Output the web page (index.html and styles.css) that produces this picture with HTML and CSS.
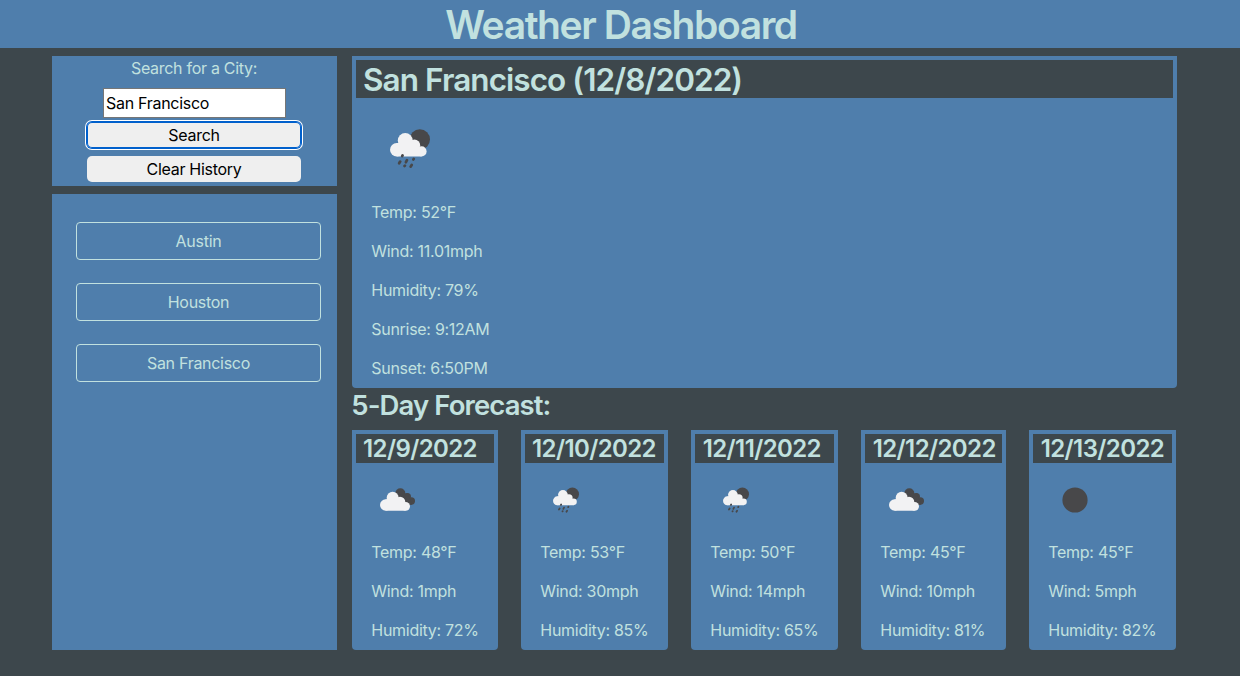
FILE: index.html
```html
<!DOCTYPE html>
<html lang="en">
<head>
<meta charset="utf-8">
<title>Weather Dashboard</title>
<link rel="stylesheet" href="styles.css">
</head>
<body>
<svg class="defs" aria-hidden="true">
  <symbol id="rain" viewBox="30 26 118 115">
    <circle cx="118" cy="57" r="30" fill="#48484a"/>
    <g fill="#f2f2f3"><circle cx="50" cy="87" r="20"/><circle cx="75" cy="60" r="22"/><circle cx="102" cy="74" r="17"/><circle cx="123" cy="92" r="15"/><path d="M50 67h50l23 20v20H50z"/></g>
    <g stroke="#48484a" stroke-width="8" stroke-linecap="round"><path d="M67 104l-1 2M60 122l-3 5M80 118l-3 6M100 114l-1 2M74 134l-1 1M94 132l-3 5"/></g>
  </symbol>
  <symbol id="clouds" viewBox="105 191 105 67">
    <g fill="#48484a"><circle cx="166" cy="206" r="15"/><circle cx="187" cy="216" r="11"/><circle cx="199" cy="229" r="11"/><path d="M155 210l34-4 12 34h-30z"/></g>
    <g fill="#f2f2f3"><circle cx="122" cy="241" r="17"/><circle cx="143" cy="219" r="18"/><circle cx="165" cy="232" r="16"/><circle cx="182" cy="245" r="13"/><path d="M122 224h43l17 12v22h-60z"/></g>
  </symbol>
  <symbol id="night" viewBox="0 0 26 26"><circle cx="13" cy="13" r="12.6" fill="#48484a"/></symbol>
</svg>
<header class="banner"><h1>Weather Dashboard</h1></header>
<main class="layout">
  <aside class="sidebar">
    <form class="search">
      <label for="city">Search for a City:</label>
      <input id="city" class="city" type="text" value="San Francisco">
      <button type="button" class="btn focused">Search</button>
      <button type="button" class="btn">Clear History</button>
    </form>
    <div class="history">
      <button type="button" class="past">Austin</button>
      <button type="button" class="past">Houston</button>
      <button type="button" class="past">San Francisco</button>
    </div>
  </aside>
  <section class="content">
    <article class="card today">
      <h2>San Francisco (12/8/2022)</h2>
      <div class="icon"><svg class="rain"><use href="#rain"/></svg></div>
      <p>Temp: 52°F</p><p>Wind: 11.01mph</p><p>Humidity: 79%</p><p>Sunrise: 9:12AM</p><p>Sunset: 6:50PM</p>
    </article>
    <h3 class="title">5-Day Forecast:</h3>
    <div class="forecast">
      <article class="card"><h4>12/9/2022</h4><div class="icon"><svg class="clouds"><use href="#clouds"/></svg></div><p>Temp: 48°F</p><p>Wind: 1mph</p><p>Humidity: 72%</p></article>
      <article class="card"><h4>12/10/2022</h4><div class="icon"><svg class="rain"><use href="#rain"/></svg></div><p>Temp: 53°F</p><p>Wind: 30mph</p><p>Humidity: 85%</p></article>
      <article class="card"><h4>12/11/2022</h4><div class="icon"><svg class="rain"><use href="#rain"/></svg></div><p>Temp: 50°F</p><p>Wind: 14mph</p><p>Humidity: 65%</p></article>
      <article class="card"><h4>12/12/2022</h4><div class="icon"><svg class="clouds"><use href="#clouds"/></svg></div><p>Temp: 45°F</p><p>Wind: 10mph</p><p>Humidity: 81%</p></article>
      <article class="card"><h4>12/13/2022</h4><div class="icon"><svg class="night"><use href="#night"/></svg></div><p>Temp: 45°F</p><p>Wind: 5mph</p><p>Humidity: 82%</p></article>
    </div>
  </section>
</main>
</body>
</html>
```
FILE: styles.css
```css
* { box-sizing: border-box; }
body { margin: 0; height: 676px; overflow: hidden; background: #3d474c; color: #c1e1df; font: 16px/24px Inter, sans-serif; letter-spacing: -0.29px; }
h1, h2, h3, h4, p { margin: 0; font-weight: 600; }
p { font-weight: 400; }
.defs { display: none; }
.banner { height: 48px; background: #4f7eac; text-align: center; }
.banner h1 { font-size: 39px; font-weight: 570; line-height: 48px; letter-spacing: -1.4px; padding: 1px 0 0 2px; }
.layout { display: flex; gap: 15px; padding: 8px 63px 0 52px; }
.sidebar { width: 285px; display: flex; flex-direction: column; gap: 8px; }
.search { height: 130px; background: #4f7eac; display: flex; flex-direction: column; align-items: center; padding-right: 1px; }
.search label { margin-bottom: 8px; }
.city { width: 183px; height: 30px; flex: none; margin: 0 0 3px 1px; border: 1px solid #767676; padding: 1px 2px; background: #fff; color: #000; font: inherit; letter-spacing: inherit; }
.btn { width: 214px; height: 26px; flex: none; margin: 1px 0 7px; padding: 0; border: 0; border-radius: 5px; background: #efefef; color: #000; font: inherit; letter-spacing: inherit; }
.focused { box-shadow: inset 0 0 0 1px #0060cc, 0 0 0 1px #0060cc, 0 0 0 2px #fff; }
.history { height: 456px; background: #4f7eac; padding: 28px 16px 0 24px; display: flex; flex-direction: column; gap: 23px; }
.past { height: 38px; border: 1px solid #c1e1df; border-radius: 4px; background: none; color: inherit; font: inherit; letter-spacing: inherit; }
.content { width: 825px; }
.card { background: #4f7eac; padding: 4px; border-radius: 0 0 4px 4px; }
.card p { margin: 0 0 15px 15.3px; white-space: nowrap; }
.card p:last-child { margin-bottom: 0; }
.today { height: 332px; }
.today h2 { height: 38px; padding: 1px 7px 0; background: #3d474c; font-size: 31.5px; line-height: 38px; letter-spacing: -0.94px; }
.today .icon { height: 102px; padding: 31px 0 0 33.5px; }
.today .rain { width: 40px; height: 39px; }
.icon svg { display: block; }
.title { height: 42px; font-size: 27.5px; line-height: 34px; letter-spacing: -0.9px; text-indent: -0.7px; }
.forecast { display: grid; grid-template-columns: 146px 147px 147px 145px 147px; gap: 23px; }
.forecast .card { height: 220px; }
.card h4 { height: 29px; padding: 0 7px; background: #3d474c; font-size: 24px; line-height: 29px; letter-spacing: -0.6px; white-space: nowrap; }
.card:nth-child(n+3) h4 { padding-left: 7.7px; }
.forecast .icon { height: 77px; padding-top: 24px; }
.forecast .rain { width: 26px; height: 26px; margin-left: 28px; }
.forecast .clouds { width: 35px; height: 23px; margin: 1px 0 0 24px; }
.forecast .night { width: 26px; height: 26px; margin-left: 28.5px; }
```
